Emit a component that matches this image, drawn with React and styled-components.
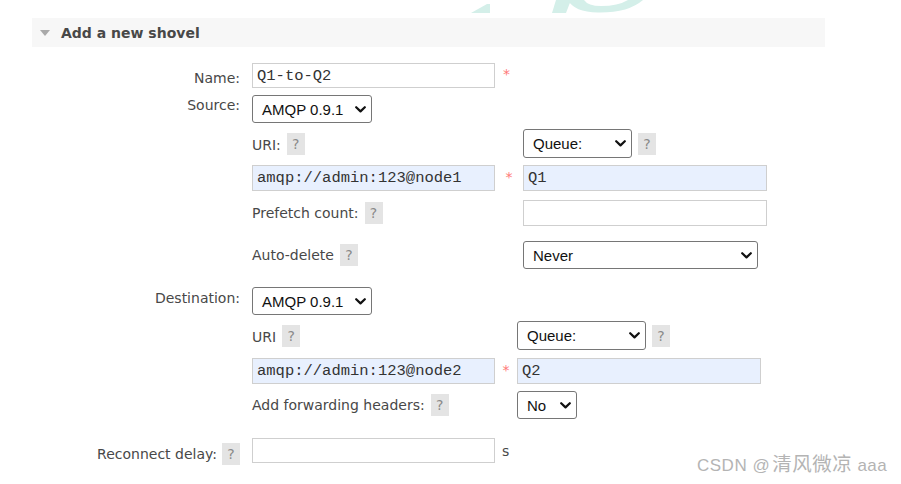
import React from "react";
import styled, { createGlobalStyle } from "styled-components";

const Global = createGlobalStyle`
  html, body { margin: 0; padding: 0; background: #fff; }
  body { width: 901px; height: 484px; overflow: hidden; position: relative; }
`;

const Page = styled.div`
  position: relative;
  width: 901px;
  height: 484px;
  padding: 18px 0 0 32px;
  box-sizing: border-box;
  font-family: "DejaVu Sans", Verdana, sans-serif;
  font-size: 14px;
  color: #484848;
`;

const TopMark = styled.svg`
  position: absolute;
  left: 0;
  top: 0;
`;

const Header = styled.div`
  width: 793px;
  height: 29px;
  background: #f7f7f7;
  display: flex;
  align-items: center;
  gap: 11px;
  padding-left: 8px;
  box-sizing: border-box;
  font-weight: bold;
  font-size: 14px;
  color: #484848;
`;

const Triangle = styled.span`
  width: 0;
  height: 0;
  border-left: 5px solid transparent;
  border-right: 5px solid transparent;
  border-top: 6px solid #a9a9a9;
  margin-top: 1px;
`;

const Form = styled.div`
  display: flex;
  flex-direction: column;
`;

const Field = styled.div`
  display: grid;
  grid-template-columns: 208px auto;
  column-gap: 12px;
  margin-top: ${(p) => p.$mt}px;
`;

const Label = styled.div`
  display: flex;
  justify-content: flex-end;
  align-items: ${(p) => (p.$center ? "center" : "flex-start")};
  align-self: start;
  padding-top: ${(p) => p.$pt}px;
  line-height: 16px;
  gap: 5px;
`;

const Cell = styled.div`
  display: flex;
  align-items: ${(p) => (p.$align || "center")};
  gap: ${(p) => p.$gap ?? 6}px;
`;

const SubRow = styled.div`
  display: grid;
  grid-template-columns: 243px ${(p) => p.$star}px auto;
  align-items: center;
  height: ${(p) => p.$h}px;
  margin-top: ${(p) => p.$mt || 0}px;
`;

const Text = styled.span`
  line-height: 16px;
  padding-top: ${(p) => p.$pt || 0}px;
`;

const Help = styled.span`
  display: inline-flex;
  align-items: center;
  justify-content: center;
  width: 18px;
  height: 22px;
  background: #e4e4e4;
  color: #8a8a8a;
  font-size: 14px;
`;

const Input = styled.input`
  box-sizing: border-box;
  width: ${(p) => p.$w}px;
  height: ${(p) => p.$h || 26}px;
  margin: 0;
  border: 1px solid #cfcfcf;
  background: ${(p) => (p.$filled ? "#e8f0fe" : "#fff")};
  padding: 0 0 0 4px;
  font-family: "Liberation Mono", "Courier New", monospace;
  font-size: 15.5px;
  color: #333;
  outline: none;
`;

const Star = styled.span`
  color: #f77;
  font-size: 14px;
  line-height: 14px;
  align-self: start;
  justify-self: center;
  padding-top: ${(p) => p.$pt ?? 5}px;
`;

const Select = styled.div`
  box-sizing: border-box;
  width: ${(p) => p.$w}px;
  height: ${(p) => p.$h || 28}px;
  border: 1px solid #767676;
  border-radius: 3px;
  background: #fff;
  display: flex;
  align-items: center;
  justify-content: space-between;
  padding: 0 5px 0 9px;
  font-family: "Liberation Sans", Arial, sans-serif;
  font-size: 15px;
  color: #111;
`;

const Unit = styled.span`
  margin-left: 7px;
  padding-top: 5px;
  color: #484848;
`;

const Watermark = styled.div`
  position: absolute;
  left: 697px;
  top: 454px;
  font-family: "Liberation Sans", "Noto Sans CJK SC", sans-serif;
  font-size: 17px;
  letter-spacing: 0.5px;
  color: #b4b4b4;
  white-space: nowrap;
`;

const Cjk = styled.span`
  font-family: "Noto Sans CJK SC", sans-serif;
  font-size: 19.5px;
  line-height: 17px;
  margin-left: 2px;
`;

const Chevron = () => (
  <svg width="11" height="7" viewBox="0 0 11 7">
    <polyline points="1.2,1.2 5.5,5.4 9.8,1.2" fill="none" stroke="#111" strokeWidth="2.2" strokeLinecap="round" strokeLinejoin="round" />
  </svg>
);

const Sel = ({ w, h, children }) => (
  <Select $w={w} $h={h}>
    <span>{children}</span>
    <Chevron />
  </Select>
);

export default function App() {
  return (
    <Page>
      <Global />
      <TopMark width="901" height="16" viewBox="0 0 901 16">
        <g fill="#d4efe9">
          <polygon points="471,13 487,4 490,4 490,13" />
          <polygon points="556,0 571,0 566,13 552,13" />
          <path d="M568,0 Q574,12 598,12.5 Q628,13 643,0 L628,0 Q618,6 601,6 Q588,6 584,0 Z" />
        </g>
      </TopMark>

      <Header>
        <Triangle />
        <span>Add a new shovel</span>
      </Header>

      <Form>
        <Field $mt={16}>
          <Label $pt={7}>Name:</Label>
          <Cell $align="flex-start" $gap={0}>
            <Input $w={243} $h={25} readOnly value="Q1-to-Q2" />
            <Star $pt={4} style={{ marginLeft: 8 }}>*</Star>
          </Cell>
        </Field>

        <Field $mt={7}>
          <Label $pt={2}>Source:</Label>
          <Cell>
            <Sel w={120}>AMQP 0.9.1</Sel>
          </Cell>
        </Field>

        <Field $mt={6}>
          <div />
          <div>
            <SubRow $star={28} $h={29}>
              <Cell><Text $pt={2}>URI:</Text><Help>?</Help></Cell>
              <span />
              <Cell><Sel w={109} h={29}>Queue:</Sel><Help>?</Help></Cell>
            </SubRow>
            <SubRow $star={28} $h={26} $mt={7}>
              <Input $w={243} $filled readOnly value="amqp://admin:123@node1" />
              <Star>*</Star>
              <Input $w={244} $filled readOnly value="Q1" />
            </SubRow>
            <SubRow $star={28} $h={26} $mt={9}>
              <Cell><Text>Prefetch count:</Text><Help>?</Help></Cell>
              <span />
              <Input $w={244} readOnly value="" />
            </SubRow>
            <SubRow $star={28} $h={28} $mt={15}>
              <Cell><Text>Auto-delete</Text><Help>?</Help></Cell>
              <span />
              <Sel w={235}>Never</Sel>
            </SubRow>
          </div>
        </Field>

        <Field $mt={18}>
          <Label $pt={3}>Destination:</Label>
          <Cell>
            <Sel w={120}>AMQP 0.9.1</Sel>
          </Cell>
        </Field>

        <Field $mt={6}>
          <div />
          <div>
            <SubRow $star={22} $h={29}>
              <Cell><Text $pt={2}>URI</Text><Help>?</Help></Cell>
              <span />
              <Cell><Sel w={129} h={29}>Queue:</Sel><Help>?</Help></Cell>
            </SubRow>
            <SubRow $star={22} $h={26} $mt={8}>
              <Input $w={243} $filled readOnly value="amqp://admin:123@node2" />
              <Star>*</Star>
              <Input $w={244} $filled readOnly value="Q2" />
            </SubRow>
            <SubRow $star={22} $h={28} $mt={7}>
              <Cell><Text>Add forwarding headers:</Text><Help>?</Help></Cell>
              <span />
              <Sel w={60}>No</Sel>
            </SubRow>
          </div>
        </Field>

        <Field $mt={19}>
          <Label $pt={5} $center>
            <span>Reconnect delay:</span>
            <Help>?</Help>
          </Label>
          <Cell $align="flex-start" $gap={0}>
            <Input $w={243} $h={25} readOnly value="" />
            <Unit>s</Unit>
          </Cell>
        </Field>
      </Form>

      <Watermark>CSDN @<Cjk>清风微凉</Cjk> aaa</Watermark>
    </Page>
  );
}
